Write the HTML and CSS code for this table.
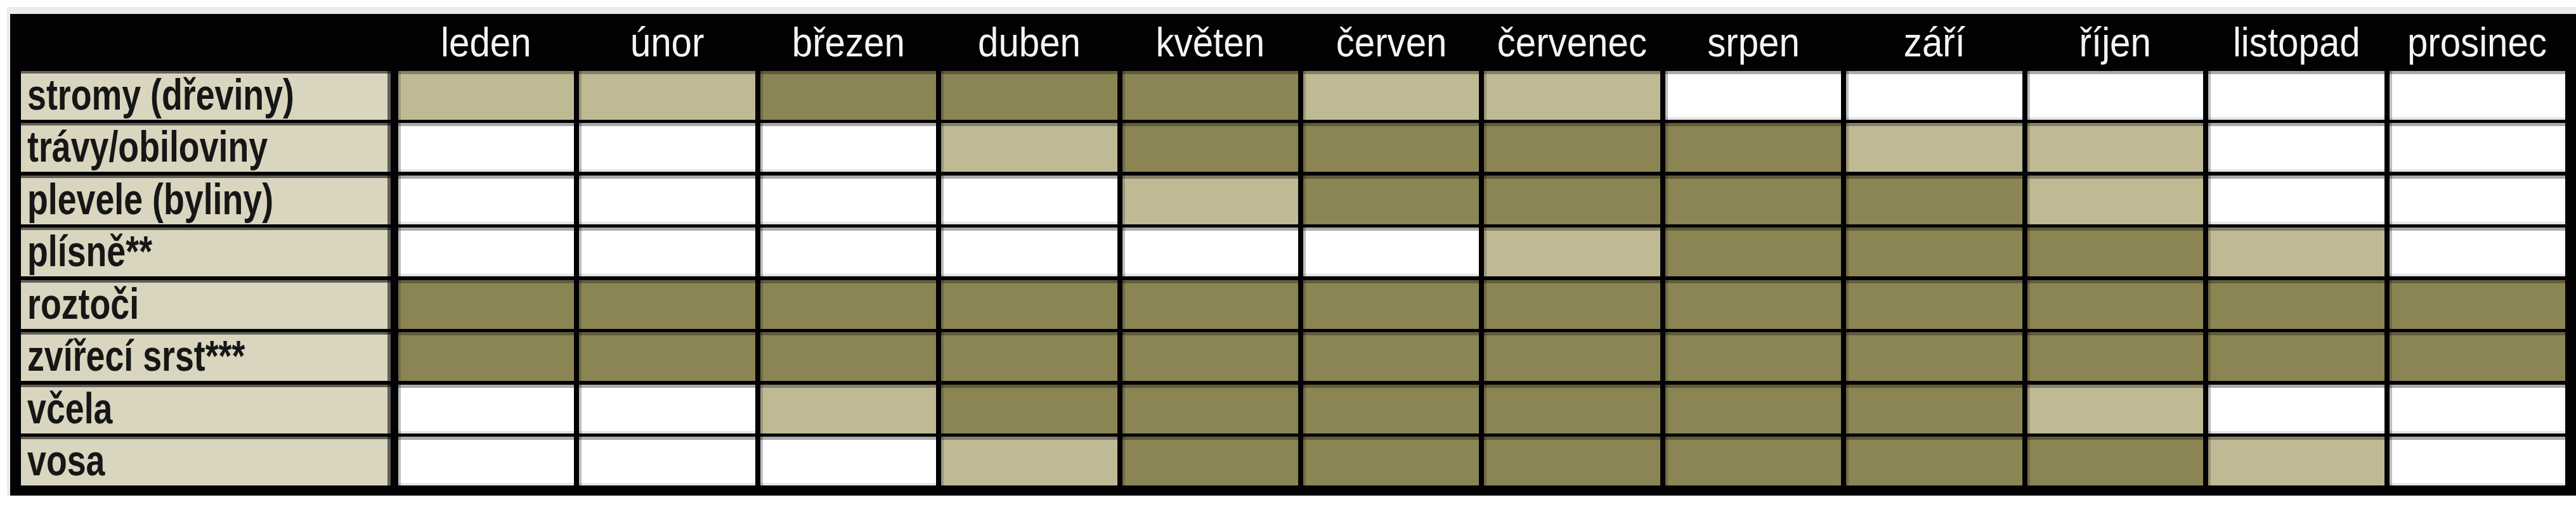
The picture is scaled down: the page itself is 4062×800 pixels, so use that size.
FILE: index.html
```html
<!DOCTYPE html>
<html lang="cs">
<head>
<meta charset="utf-8">
<title>Pylový kalendář</title>
<link rel="stylesheet" href="styles.css">
</head>
<body>
<div class="frame">
  <div class="table">
    <div class="corner"></div>
    <div class="month"><span>leden</span></div>
    <div class="month"><span>únor</span></div>
    <div class="month"><span>březen</span></div>
    <div class="month"><span>duben</span></div>
    <div class="month"><span>květen</span></div>
    <div class="month"><span>červen</span></div>
    <div class="month"><span>červenec</span></div>
    <div class="month"><span>srpen</span></div>
    <div class="month"><span>září</span></div>
    <div class="month"><span>říjen</span></div>
    <div class="month"><span>listopad</span></div>
    <div class="month"><span>prosinec</span></div>

    <div class="label"><span>stromy (dřeviny)</span></div>
    <div class="cell l"></div><div class="cell l"></div><div class="cell d"></div><div class="cell d"></div><div class="cell d"></div><div class="cell l"></div><div class="cell l"></div><div class="cell w"></div><div class="cell w"></div><div class="cell w"></div><div class="cell w"></div><div class="cell w"></div>

    <div class="label"><span>trávy/obiloviny</span></div>
    <div class="cell w"></div><div class="cell w"></div><div class="cell w"></div><div class="cell l"></div><div class="cell d"></div><div class="cell d"></div><div class="cell d"></div><div class="cell d"></div><div class="cell l"></div><div class="cell l"></div><div class="cell w"></div><div class="cell w"></div>

    <div class="label"><span>plevele (byliny)</span></div>
    <div class="cell w"></div><div class="cell w"></div><div class="cell w"></div><div class="cell w"></div><div class="cell l"></div><div class="cell d"></div><div class="cell d"></div><div class="cell d"></div><div class="cell d"></div><div class="cell l"></div><div class="cell w"></div><div class="cell w"></div>

    <div class="label"><span>plísně**</span></div>
    <div class="cell w"></div><div class="cell w"></div><div class="cell w"></div><div class="cell w"></div><div class="cell w"></div><div class="cell w"></div><div class="cell l"></div><div class="cell d"></div><div class="cell d"></div><div class="cell d"></div><div class="cell l"></div><div class="cell w"></div>

    <div class="label"><span>roztoči</span></div>
    <div class="cell d"></div><div class="cell d"></div><div class="cell d"></div><div class="cell d"></div><div class="cell d"></div><div class="cell d"></div><div class="cell d"></div><div class="cell d"></div><div class="cell d"></div><div class="cell d"></div><div class="cell d"></div><div class="cell d"></div>

    <div class="label"><span>zvířecí srst***</span></div>
    <div class="cell d"></div><div class="cell d"></div><div class="cell d"></div><div class="cell d"></div><div class="cell d"></div><div class="cell d"></div><div class="cell d"></div><div class="cell d"></div><div class="cell d"></div><div class="cell d"></div><div class="cell d"></div><div class="cell d"></div>

    <div class="label"><span>včela</span></div>
    <div class="cell w"></div><div class="cell w"></div><div class="cell l"></div><div class="cell d"></div><div class="cell d"></div><div class="cell d"></div><div class="cell d"></div><div class="cell d"></div><div class="cell d"></div><div class="cell l"></div><div class="cell w"></div><div class="cell w"></div>

    <div class="label"><span>vosa</span></div>
    <div class="cell w"></div><div class="cell w"></div><div class="cell w"></div><div class="cell l"></div><div class="cell d"></div><div class="cell d"></div><div class="cell d"></div><div class="cell d"></div><div class="cell d"></div><div class="cell d"></div><div class="cell l"></div><div class="cell w"></div>
  </div>
</div>
</body>
</html>
```
FILE: styles.css
```css
html, body {
  margin: 0;
  padding: 0;
  background: #ffffff;
}

.frame {
  margin: 11px 0 0 11px;
  border-top: 11px solid #ebebeb;
  border-left: 5px solid #ebebeb;
  height: 760px;
}

.table {
  box-sizing: border-box;
  height: 760px;
  background: #020204;
  padding: 0 17px 15px 17px;
  display: grid;
  grid-template-columns: 587px repeat(12, 1fr);
  grid-template-rows: 84px repeat(8, 77px);
  column-gap: 8px;
  row-gap: 5.5px;
  font-family: "Liberation Sans", Arial, sans-serif;
}

.corner {
  margin-right: 4px;
}

.month {
  display: flex;
  justify-content: center;
  padding-top: 13px;
  line-height: 64px;
  font-size: 64px;
  color: #f4f4f4;
  white-space: nowrap;
}

.month span {
  display: inline-block;
  transform: scaleX(0.91);
  transform-origin: center;
}

.label {
  margin-right: 4px;
  background: #d9d5bf;
  box-shadow: inset 0 4px 0 rgba(0, 0, 0, 0.55), inset -5px 0 0 rgba(0, 0, 0, 0.55);
  padding: 3px 0 0 10px;
  font-size: 68px;
  line-height: 68px;
  font-weight: 700;
  color: #161616;
  white-space: nowrap;
  overflow: hidden;
}

.label span {
  display: inline-block;
  transform: scaleX(0.79);
  transform-origin: left center;
}

.cell {
  box-shadow: inset 0 5px 0 rgba(0, 0, 0, 0.3), inset 4px 0 0 rgba(0, 0, 0, 0.18);
}

.cell.w {
  background: #ffffff;
  box-shadow: inset 0 5px 0 rgba(0, 0, 0, 0.33), inset 4px 0 0 rgba(0, 0, 0, 0.25), inset 0 -4px 0 rgba(0, 0, 0, 0.1);
}

.cell.l {
  background: #bfb994;
}

.cell.d {
  background: #8b8453;
}
```
